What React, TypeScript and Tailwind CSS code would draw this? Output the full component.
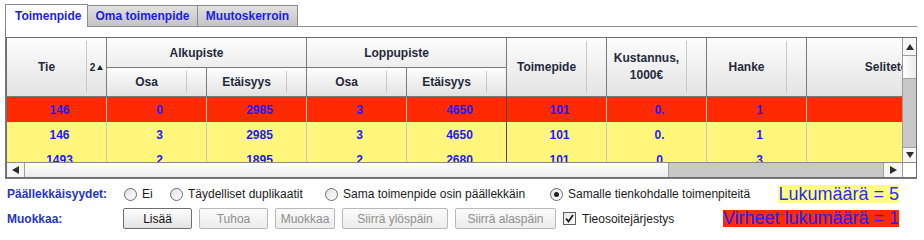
import React from "react";

const Tri = ({ dir }: { dir: "up" | "down" | "left" | "right" }) => {
  const pts =
    dir === "up"
      ? "0,6 4,0 8,6"
      : dir === "down"
      ? "0,0 8,0 4,6"
      : dir === "left"
      ? "7,0 7,8 0,4"
      : "0,0 0,8 7,4";
  const w = dir === "up" || dir === "down" ? 8 : 7;
  const h = dir === "up" || dir === "down" ? 6 : 8;
  return (
    <svg width={w} height={h} viewBox={`0 0 ${w} ${h}`}>
      <polygon points={pts} fill="#2e2e2e" />
    </svg>
  );
};

const SortSep = ({ children }: { children?: React.ReactNode }) => (
  <div className="w-[20px] flex items-stretch">
    <div className="my-[3px] border-l border-[#c9c9c9] w-full flex items-center justify-center">
      {children}
    </div>
  </div>
);

const HLeaf = ({
  label,
  span2rows,
  sort,
  wide,
}: {
  label: React.ReactNode;
  span2rows?: boolean;
  sort?: React.ReactNode;
  wide?: boolean;
}) => (
  <div
    className={`${span2rows ? "row-span-2" : ""} flex border-r border-b border-[#7a7a7a] bg-linear-to-b from-[#fdfdfd] to-[#e3e3e3] ${
      wide ? "" : ""
    }`}
  >
    <div className="flex-1 flex items-center justify-center text-center leading-[17px]">{label}</div>
    <SortSep>{sort}</SortSep>
  </div>
);

const HGroup = ({ label }: { label: string }) => (
  <div className="col-span-2 flex items-center justify-center pr-[20px] border-r border-b border-[#7a7a7a] bg-linear-to-b from-[#fdfdfd] to-[#ededed]">
    {label}
  </div>
);

const rows: { bg: string; v: string[] }[] = [
  { bg: "bg-[#ff2a00]", v: ["146", "0", "2985", "3", "4650", "101", "0.", "1", ""] },
  { bg: "bg-[#fff67b]", v: ["146", "3", "2985", "3", "4650", "101", "0.", "1", ""] },
  { bg: "bg-[#fff67b]", v: ["1493", "2", "1895", "2", "2680", "101", "0", "3", ""] },
];

const cols = "grid-cols-[100px_100px_100px_100px_100px_100px_100px_100px_200px]";

const Btn = ({ label, w, enabled }: { label: string; w: string; enabled?: boolean }) => (
  <div
    className={`${w} h-[21px] flex items-center justify-center rounded-[2px] border text-[12px] ${
      enabled
        ? "border-[#6f6f6f] text-[#111] bg-linear-to-b from-white to-[#e2e2e2]"
        : "border-[#b8b8b8] text-[#8e8e8e] bg-linear-to-b from-[#fbfbfb] to-[#ececec]"
    }`}
  >
    {label}
  </div>
);

const Radio = ({ label, w, checked }: { label: string; w?: string; checked?: boolean }) => (
  <div className={`${w ?? ""} flex items-center gap-[5px]`}>
    <div className="w-[13px] h-[13px] rounded-full border border-[#6a6a6a] bg-linear-to-br from-[#e2e2e2] to-white flex items-center justify-center">
      {checked && <div className="w-[5px] h-[5px] rounded-full bg-[#1e1e1e]" />}
    </div>
    <span className="text-[12px] text-[#1b1b1b]">{label}</span>
  </div>
);

export default function App() {
  return (
    <div className="w-[924px] h-[240px] bg-white overflow-hidden font-[family-name:Liberation_Sans,Arial,sans-serif]">
      {/* Tabs */}
      <div className="flex pl-[5px] pt-[4px] h-[27px]">
        <div className="w-[83px] h-[23px] border-l border-t border-r border-[#8c8c8c] bg-white flex items-center pl-[9px] text-[12px] font-bold text-[#1d1ddf]">
          Toimenpide
        </div>
        <div className="w-[110px] mt-[1px] h-[22px] border-t border-r border-b border-[#8c8c8c] bg-linear-to-b from-[#e1e1e1] to-[#c4c4c4] flex items-center justify-center text-[12px] font-bold text-[#1d1ddf]">
          Oma toimenpide
        </div>
        <div className="w-[100px] mt-[1px] h-[22px] border-t border-r border-b border-[#8c8c8c] bg-linear-to-b from-[#e1e1e1] to-[#c4c4c4] flex items-center justify-center text-[12px] font-bold text-[#1d1ddf]">
          Muutoskerroin
        </div>
        <div className="w-[619px] h-[23px] border-b border-[#8c8c8c]" />
      </div>

      {/* Panel */}
      <div className="ml-[5px] w-[912px] border-l border-b border-[#7a7a7a] pt-[10px]">
        <div className="w-[911px] border border-[#6e6e6e]">
          <div className="flex h-[124px]">
            {/* viewport */}
            <div className="w-[895px] overflow-hidden">
              <div className={`grid ${cols} grid-rows-[30px_29px] w-[1000px] text-[12px] font-bold text-[#1f2a3c]`}>
                <HLeaf
                  label="Tie"
                  span2rows
                  sort={
                    <span className="flex items-center gap-[2px] text-[10px] font-bold text-[#222]">
                      2
                      <svg width="6" height="5" viewBox="0 0 6 5">
                        <polygon points="0,5 3,0 6,5" fill="#222" />
                      </svg>
                    </span>
                  }
                />
                <HGroup label="Alkupiste" />
                <HGroup label="Loppupiste" />
                <HLeaf label="Toimepide" span2rows />
                <HLeaf
                  label={
                    <span>
                      Kustannus,
                      <br />
                      1000€
                    </span>
                  }
                  span2rows
                />
                <HLeaf label="Hanke" span2rows />
                <HLeaf label="Seliteteksti" span2rows wide />
                <HLeaf label="Osa" />
                <HLeaf label="Etäisyys" />
                <HLeaf label="Osa" />
                <HLeaf label="Etäisyys" />
              </div>
              <div className="h-[65px] overflow-hidden">
                {rows.map((r, i) => (
                  <div key={i} className={`grid ${cols} w-[1000px] h-[25px] ${r.bg}`}>
                    {r.v.map((t, j) => (
                      <div
                        key={j}
                        className={`flex items-center justify-center pl-[6px] text-[12px] font-bold text-[#1a1aff] border-r ${
                          j === 4 ? "border-[#4a4a4a]" : "border-[#c6c6c6]"
                        }`}
                      >
                        {t}
                      </div>
                    ))}
                  </div>
                ))}
              </div>
            </div>
            {/* vertical scrollbar */}
            <div className="w-[14px] flex flex-col border-l border-[#9a9a9a]">
              <div className="h-[18px] bg-[#f6f6f6] border-b border-[#a0a0a0] flex items-center justify-center">
                <Tri dir="up" />
              </div>
              <div className="h-[23px] bg-linear-to-r from-white to-[#ececec] border-b border-[#a0a0a0]" />
              <div className="flex-1 bg-[#c8c8c8]" />
              <div className="h-[15px] bg-[#f6f6f6] border-t border-[#a0a0a0] flex items-center justify-center">
                <Tri dir="down" />
              </div>
            </div>
          </div>
          {/* horizontal scrollbar */}
          <div className="flex h-[15px] border-t border-[#8a8a8a]">
            <div className="w-[18px] bg-[#f6f6f6] border-r border-[#a0a0a0] flex items-center justify-center">
              <Tri dir="left" />
            </div>
            <div className="w-[644px] bg-linear-to-b from-white to-[#ececec] border-r border-[#a0a0a0]" />
            <div className="w-[214px] bg-[#c8c8c8]" />
            <div className="w-[19px] bg-[#f6f6f6] border-l border-[#a0a0a0] flex items-center justify-center">
              <Tri dir="right" />
            </div>
            <div className="w-[14px] bg-white border-l border-[#9a9a9a]" />
          </div>
        </div>
      </div>

      {/* Controls */}
      <div className="w-[899px] mt-[5px] h-[20px] flex items-center">
        <div className="w-[124px] pl-[7px] text-[12px] font-bold text-[#2436c0]">Päällekkäisyydet:</div>
        <Radio label="Ei" w="w-[46px]" />
        <Radio label="Täydelliset duplikaatit" w="w-[155px]" />
        <Radio label="Sama toimenpide osin päällekkäin" w="w-[225px]" />
        <Radio label="Samalle tienkohdalle toimenpiteitä" checked />
        <div className="ml-auto h-[18px] leading-[18px] bg-[#ffff80] text-[18px] text-[#2a2aff]">Lukumäärä = 5</div>
      </div>
      <div className="w-[899px] mt-[4px] h-[21px] flex items-center">
        <div className="w-[123px] pl-[7px] text-[12px] font-bold text-[#2436c0]">Muokkaa:</div>
        <div className="flex gap-[7px]">
          <Btn label="Lisää" w="w-[69px]" enabled />
          <Btn label="Tuhoa" w="w-[69px]" />
          <Btn label="Muokkaa" w="w-[60px]" />
          <Btn label="Siirrä ylöspäin" w="w-[106px]" />
          <Btn label="Siirrä alaspäin" w="w-[101px]" />
        </div>
        <div className="ml-[7px] flex items-center gap-[6px]">
          <div className="w-[13px] h-[13px] border border-[#5e5e5e] bg-linear-to-br from-[#e6e6e6] to-white flex items-center justify-center">
            <svg width="9" height="9" viewBox="0 0 9 9">
              <polyline points="1,4.5 3.5,7.5 8,1" fill="none" stroke="#1e1e1e" strokeWidth="1.8" />
            </svg>
          </div>
          <span className="text-[12px] text-[#1b1b1b]">Tieosoitejärjestys</span>
        </div>
        <div className="ml-auto h-[17px] leading-[17px] bg-[#ff2a00] text-[18px] text-[#2020ff]">
          Virheet lukumäärä = 1
        </div>
      </div>
    </div>
  );
}
